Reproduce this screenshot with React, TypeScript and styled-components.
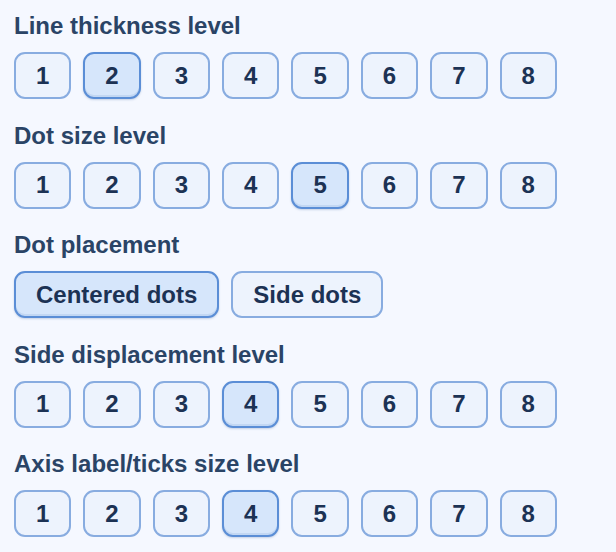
import React, { useState } from "react";
import styled, { createGlobalStyle } from "styled-components";

const GlobalStyle = createGlobalStyle`
  html, body {
    margin: 0;
    padding: 0;
    background: #f5f8ff;
  }
  body {
    font-family: "Liberation Sans", Arial, sans-serif;
  }
`;

const Panel = styled.div`
  display: flex;
  flex-direction: column;
  padding: 12px 14px 0;
`;

const Section = styled.section`
  display: flex;
  flex-direction: column;
  gap: 12px;
  margin-bottom: 22.5px;
`;

const Label = styled.div`
  font-size: 24px;
  line-height: 28px;
  font-weight: 700;
  color: #2a4466;
`;

const Row = styled.div`
  display: flex;
  gap: 12px;
`;

const Choice = styled.button<{ $active: boolean }>`
  height: 47px;
  padding: 0 20px;
  border-radius: 11px;
  border: 2px solid ${(p) => (p.$active ? "#5b8ed6" : "#88ace0")};
  background: ${(p) => (p.$active ? "#d6e6fb" : "#edf3fd")};
  box-shadow: ${(p) =>
    p.$active ? "inset 0 -2px 0 #c2d7f3, 0 1px 2px rgba(60, 100, 160, 0.25)" : "none"};
  font-family: "Liberation Sans", Arial, sans-serif;
  font-size: 24px;
  font-weight: 700;
  color: #1c3254;
  cursor: pointer;
`;

const levels = [1, 2, 3, 4, 5, 6, 7, 8];

const LevelPicker = ({ title, initial }: { title: string; initial: number }) => {
  const [value, setValue] = useState(initial);
  return (
    <Section>
      <Label>{title}</Label>
      <Row>
        {levels.map((l) => (
          <Choice key={l} $active={l === value} onClick={() => setValue(l)}>
            {l}
          </Choice>
        ))}
      </Row>
    </Section>
  );
};

const App = () => {
  const [placement, setPlacement] = useState("centered");

  return (
    <Panel>
      <GlobalStyle />
      <LevelPicker title="Line thickness level" initial={2} />
      <LevelPicker title="Dot size level" initial={5} />
      <Section>
        <Label>Dot placement</Label>
        <Row>
          <Choice $active={placement === "centered"} onClick={() => setPlacement("centered")}>
            Centered dots
          </Choice>
          <Choice $active={placement === "side"} onClick={() => setPlacement("side")}>
            Side dots
          </Choice>
        </Row>
      </Section>
      <LevelPicker title="Side displacement level" initial={4} />
      <LevelPicker title="Axis label/ticks size level" initial={4} />
    </Panel>
  );
};

export default App;
